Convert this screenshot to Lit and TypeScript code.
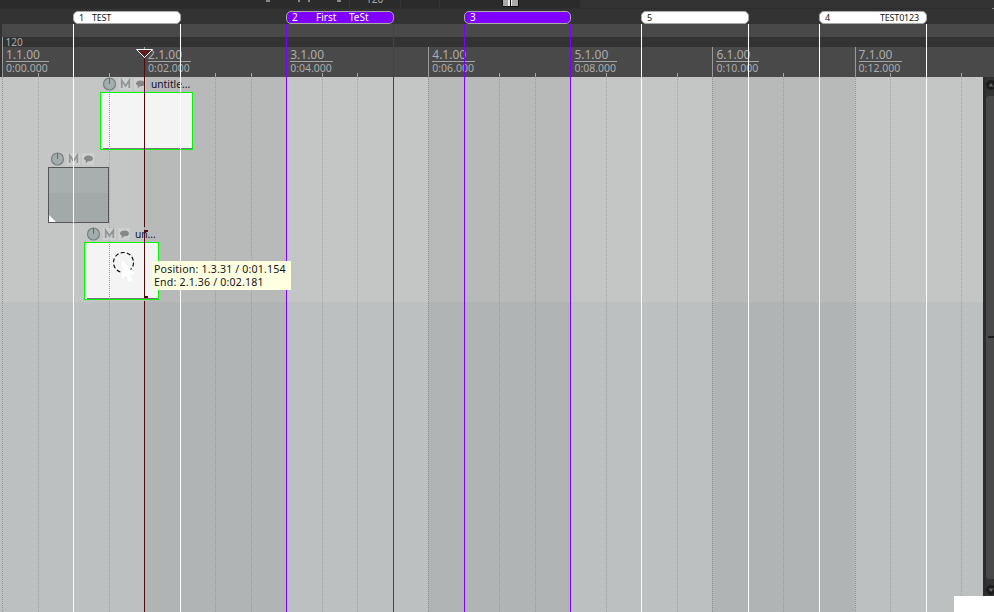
import { LitElement, html, css, svg } from "lit";
import { customElement } from "lit/decorators.js";
import { styleMap } from "lit/directives/style-map.js";

interface Region { x: number; w: number; id: string; name: string; nameX: number; kind: string; }
interface Item { x: number; y: number; w: number; h: number; name: string; muted: boolean; }

const BEAT = 35.51;
const beatX = (i: number) => Math.floor(2.77 + i * BEAT);
const beats = Array.from({ length: 28 }, (_, i) => i);

const regions: Region[] = [
  { x: 73, w: 108, id: "1", name: "TEST", nameX: 18, kind: "white" },
  { x: 286, w: 108, id: "2", name: "First", nameX: 29, kind: "violet" },
  { x: 464, w: 107, id: "3", name: "", nameX: 0, kind: "violet" },
  { x: 641, w: 108, id: "5", name: "", nameX: 0, kind: "white" },
  { x: 819, w: 108, id: "4", name: "TEST0123", nameX: 60, kind: "white" },
];

const items: Item[] = [
  { x: 100, y: 15, w: 93, h: 58, name: "untitle...", muted: false },
  { x: 48, y: 90, w: 61, h: 56, name: "", muted: true },
  { x: 84, y: 165, w: 75, h: 58, name: "un...", muted: false },
];

@customElement("app-root")
export class AppRoot extends LitElement {
  static styles = css`
    :host { display: flex; flex-direction: column; position: relative; width: 994px; height: 612px; overflow: hidden;
      font-family: "Noto Sans", sans-serif; background: #333; color: #acacac; }
    .toolbar { height: 9px; flex: none; background: linear-gradient(90deg, #2b2b2b 580px, #333 580px); border-bottom: 1px solid #2d2d2d; box-sizing: border-box; overflow: hidden; }
    .toolbar svg { display: block; }
    .regions { height: 15px; flex: none; position: relative; background: #333; z-index: 3; }
    .region { position: absolute; top: 2px; height: 13px; box-sizing: border-box; border: 1px solid #aaa; border-radius: 5px; font-size: 10px; line-height: 11px; white-space: pre; }
    .white { background: #fff; color: #151515; }
    .violet { background: #8000ff; color: #fff; }
    .region span { position: absolute; top: 0; }
    .white span { font-size: 9px; letter-spacing: -0.2px; }
    .markers { height: 13px; flex: none; background: #494949; margin-left: 2px; }
    .tempo { height: 10px; flex: none; background: #333; margin-left: 2px; border-left: 1px solid #999; box-sizing: border-box; padding-left: 2.5px; font-size: 10px; line-height: 10px; }
    .ruler { height: 30px; flex: none; background: #494949; margin-left: 2px; display: grid; grid-template-columns: repeat(7, 142.1px); overflow: hidden; }
    .measure { border-left: 1px solid #999; box-sizing: border-box; padding-left: 3px; height: 30px; }
    .measure.bare { border-color: transparent; }
    .bar { width: 43px; height: 14px; border-bottom: 1px solid #a4a4a4; font-size: 12px; line-height: 15px; }
    .time { font-size: 10.5px; line-height: 13px; }
    .arrange { flex: 1; display: flex; min-height: 0; }
    .canvas { width: 983px; position: relative; background: #bcc0c1; }
    .track { height: 225px; background: #c4c6c5; }
    .item { position: absolute; box-sizing: border-box; z-index: 1; border: 1px solid #00f800; background: #f4f4f4; }
    .item::after { content: ""; position: absolute; left: 2px; right: 0; bottom: 0; height: 1px; background: #777; }
    .item.muted { background: linear-gradient(#a9afaf 46%, #a3a8a8 46%); border-color: #555; }
    .item.muted::after { display: none; }
    .fold { position: absolute; left: 0; bottom: 0; width: 7px; height: 7px; background: #fff; clip-path: polygon(0 0, 100% 100%, 0 100%); }
    .controls { position: absolute; z-index: 1; display: flex; align-items: center; height: 14px; color: #111133; font-size: 10.2px; white-space: pre; }
    .controls svg { display: block; flex: none; margin-right: 5px; }
    .scroll { width: 11px; background: #333; }
    .scroll svg { display: block; }
    .lines { position: absolute; left: 0; top: 0; pointer-events: none; z-index: 2; }
    .grid { position: absolute; left: 0; top: 0; z-index: 0; }
    .tip { position: absolute; left: 152px; top: 261px; width: 139px; height: 29px; box-sizing: border-box; background: #ffffe1; color: #151520; font-size: 10.6px; letter-spacing: .17px; line-height: 13px; padding: 2px 2px 0; white-space: pre; z-index: 4; }
    .corner { position: absolute; right: 0; bottom: 0; width: 40px; height: 16px; background: #fff; z-index: 5; }
  `;

  private controls(i: Item) {
    return html`<div class="controls" style=${styleMap({ left: `${i.x + 2}px`, top: `${i.y - 15}px` })}>
      <svg width="44" height="14" viewBox="0 0 44 14">
        <circle cx="7.5" cy="7" r="6" fill="#a4adad" stroke="#777f7f" stroke-width="1.2"/><path d="M7.5 1V7" stroke="#636969"/>
        <path d="M17 1H30V13H17ZM32 1H44V13H32Z" fill="#d6d6d6" fill-opacity=".6"/>
        <path d="M19.7 11V3.5L23.5 9L27.3 3.5V11" fill="none" stroke="#939696" stroke-width="1.8"/>
        <path d="M34 6.5C34 2.5 43 2.5 43 6.5C43 9 40 9.4 38 9.2L35.5 11.5L36 8.7C34.6 8.2 34 7.5 34 6.5Z" fill="#858888"/>
      </svg>${i.name}</div>`;
  }

  private grid() {
    return svg`
      ${[1, 3, 5].map(m => svg`<rect x=${beatX(m * 4)} y="0" width=${beatX(m * 4 + 4) - beatX(m * 4)} height="535" fill="#000" fill-opacity=".06"/>`)}
      ${beats.map(i => svg`<path d="M${beatX(i) + .5} 0V535" stroke="#777d7d" stroke-opacity=${i % 4 ? .45 : .65} stroke-dasharray="1 1"/>`)}`;
  }

  render() {
    return html`
      <div class="toolbar"><svg width="994" height="8" viewBox="0 0 994 8">
        <path d="M266 0H270V2H266ZM298 0H300V2H298ZM308 0H310V2H308ZM337 0H341V2H337Z" fill="#888"/>
        <path d="M349.5 0V8M400.5 0V8M439.5 0V8" stroke="#363636"/>
        <text x="366" y="3.2" font-size="10" fill="#aaa">120</text>
        <rect x="502" y="-1" width="17" height="8" rx="2" fill="#111"/><rect x="503" y="0" width="15" height="6" fill="#aaa"/>
        <rect x="508" y="0" width="4" height="6" fill="#eee"/><path d="M510.5 0V6" stroke="#111"/>
      </svg></div>
      <div class="regions">${regions.map(r => html`
        <div class="region ${r.kind}" style=${styleMap({ left: `${r.x}px`, width: `${r.w}px` })}>
          <span style="left:5px">${r.id}</span>
          ${r.name ? html`<span style=${styleMap({ left: `${r.nameX}px` })}>${r.name}</span>` : ""}
          ${r.id === "2" ? html`<span style="left:62px">TeSt</span>` : ""}
        </div>`)}</div>
      <div class="markers"></div>
      <div class="tempo">120</div>
      <div class="ruler">${[0, 1, 2, 3, 4, 5, 6].map(n => html`
        <div class="measure ${n === 2 || n === 4 ? "bare" : ""}"><div class="bar">${n + 1}.1.00</div><div class="time">0:${String(n * 2).padStart(2, "0")}.000</div></div>`)}</div>
      <div class="arrange">
        <div class="canvas"><div class="track"></div>
          <svg class="grid" width="983" height="535">${this.grid()}</svg>
          ${items.map(i => html`<div class="item ${i.muted ? "muted" : ""}" style=${styleMap({ left: `${i.x}px`, top: `${i.y}px`, width: `${i.w}px`, height: `${i.h}px` })}><div class="fold"></div></div>${this.controls(i)}`)}
        </div>
        <div class="scroll"><svg width="11" height="535" viewBox="0 0 11 535">
          <rect width="3" height="535" fill="#2c2c2c"/><rect x="3" y="19" width="12" height="483" rx="3" fill="#494949"/>
          <circle cx="8" cy="8" r="5" fill="#1c1c1c"/><path d="M5.5 9.5L8 6L10.5 9.5Z" fill="#666"/>
          <circle cx="8" cy="513" r="5" fill="#1c1c1c"/><path d="M5.5 511.5L8 515L10.5 511.5Z" fill="#666"/>
          <rect x="5" y="259" width="6" height="2" fill="#1d1d1d"/>
        </svg></div>
      </div>
      <svg class="lines" width="994" height="612" viewBox="0 0 994 612">
        ${beats.filter(i => i % 4).map(i => svg`<path d="M${beatX(i) + .5} 73V77" stroke="#a4a4a4"/>`)}
        <path d="M109.5 92V149M109.5 242V299" stroke="#999" stroke-dasharray="1 1"/>
        <path d="M73.5 24V612M180.5 24V612M641.5 24V612M748.5 24V612M819.5 24V612M926.5 24V612" stroke="#fff"/>
        <path d="M286.5 24V612M393.5 24V612M464.5 24V612M570.5 24V612" stroke="#8000ff"/>
        <path d="M144.5 58V227M144.5 230V298M144.5 301V612" stroke="#500b0b"/>
        <path d="M144 231H148M144 297H148" stroke="#500b0b" stroke-width="2"/>
        <path d="M136.5 49.5H152.5L144.5 57.5Z" fill="#5a2020" stroke="#fff"/><path d="M144.5 47V49" stroke="#a4a4a4"/>
        <circle cx="123.5" cy="262.5" r="10" fill="none" stroke="#111" stroke-width="1.2" stroke-dasharray="4 2.28"/>
        <path d="M122 260V279L126 275.5L129 282L133 280L130 274.5H135Z" fill="#fff"/>
        <path d="M992 9.5H994" stroke="#ddd" stroke-width="2"/>
      </svg>
      <div class="tip">Position: 1.3.31 / 0:01.154
End: 2.1.36 / 0:02.181</div>
      <div class="corner"></div>`;
  }
}
